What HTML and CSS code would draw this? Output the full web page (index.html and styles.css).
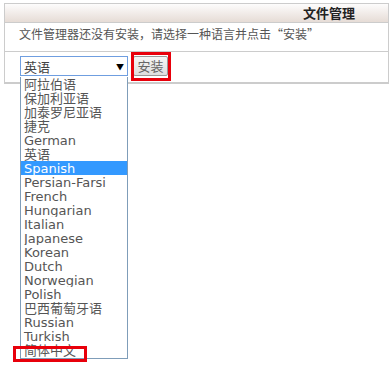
FILE: index.html
```html
<!DOCTYPE html>
<html lang="zh-CN">

<head>
  <meta charset="UTF-8">
  <title>文件管理</title>
  <link rel="stylesheet" href="styles.css">
</head>

<body>
  <div class="panel">
    <div class="panel-head">文件管理</div>
    <div class="panel-msg">文件管理器还没有安装，请选择一种语言并点击“安装”</div>
    <div class="panel-form">
      <div class="select">
        <span>英语</span>
        <span class="arrow">&#9660;</span>
      </div>
      <div class="btn">安装</div>
    </div>
  </div>

  <ul class="options">
    <li>阿拉伯语</li>
    <li>保加利亚语</li>
    <li>加泰罗尼亚语</li>
    <li>捷克</li>
    <li>German</li>
    <li>英语</li>
    <li class="selected">Spanish</li>
    <li>Persian-Farsi</li>
    <li>French</li>
    <li>Hungarian</li>
    <li>Italian</li>
    <li>Japanese</li>
    <li>Korean</li>
    <li>Dutch</li>
    <li>Norwegian</li>
    <li>Polish</li>
    <li>巴西葡萄牙语</li>
    <li>Russian</li>
    <li>Turkish</li>
    <li>简体中文</li>
  </ul>

  <div class="mark mark-btn"></div>
  <div class="mark mark-item"></div>
</body>

</html>
```
FILE: styles.css
```css
body {
  margin: 0;
  padding: 0;
  background: #fff;
  font-family: "DejaVu Sans", "Noto Sans CJK SC", sans-serif;
  font-size: 13px;
  color: #555;
}

.panel {
  margin: 3px 0 0 4px;
  width: 383px;
  border: 1px solid #ccc;
  border-bottom: 2px solid #ccc;
}

.panel-head {
  height: 18px;
  line-height: 18px;
  padding-right: 33px;
  text-align: right;
  font-family: "Noto Sans CJK SC", sans-serif;
  font-weight: bold;
  font-size: 13px;
  color: #222;
  background: linear-gradient(#fdfcfc, #e6dcd6);
  border-bottom: 1px solid #ccc;
}

.panel-msg {
  height: 28px;
  line-height: 22px;
  padding-left: 14px;
  font-family: "Noto Sans CJK SC", sans-serif;
  font-size: 12px;
  border-bottom: 1px solid #ccc;
}

.panel-form {
  height: 30px;
  padding: 4px 0 0 15px;
  box-sizing: border-box;
  display: flex;
  align-items: flex-start;
}

.select {
  width: 108px;
  height: 20px;
  box-sizing: border-box;
  border: 1px solid #6f9ee0;
  display: flex;
  justify-content: space-between;
  align-items: center;
  padding: 0 3px 0 3px;
  font-family: "Noto Sans CJK SC", sans-serif;
  color: #444;
}

.arrow {
  font-size: 8px;
  color: #000;
}

.btn {
  margin-left: 5px;
  width: 35px;
  height: 20px;
  box-sizing: border-box;
  border: 1px solid #999;
  border-radius: 2px;
  background: linear-gradient(#f6f6f6, #dedede);
  text-align: center;
  line-height: 18px;
  font-family: "Noto Sans CJK SC", sans-serif;
  color: #666;
}

.options {
  position: absolute;
  left: 20px;
  top: 77px;
  width: 108px;
  margin: 0;
  padding: 0 0 1px;
  list-style: none;
  box-sizing: border-box;
  border: 1px solid #7f9db9;
  border-top: 0;
  background: #fff;
}

.options li {
  height: 14px;
  line-height: 15px;
  padding-left: 3px;
  color: #555;
  white-space: nowrap;
  overflow: hidden;
}

.options li.selected {
  background: #3399ff;
  color: #fff;
}

.mark {
  position: absolute;
  border: 3px solid #e8000b;
}

.mark-btn {
  left: 131px;
  top: 52px;
  width: 34px;
  height: 23px;
}

.mark-item {
  left: 13px;
  top: 346px;
  width: 68px;
  height: 10px;
}
```
